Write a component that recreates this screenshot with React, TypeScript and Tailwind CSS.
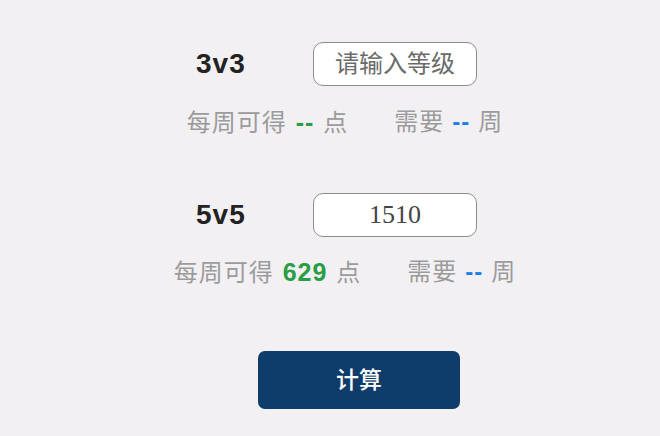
import React from "react";

const font = { fontFamily: '"Liberation Sans", "Noto Sans CJK SC", sans-serif' };

function ModeRow({ label, value }: { label: string; value?: string }) {
  return (
    <div className="flex items-center pl-[196px]">
      <span className="w-[117px] text-[28px] font-bold tracking-[1px] text-[#222]">{label}</span>
      <input
        readOnly
        value={value ?? ""}
        placeholder="请输入等级"
        className="w-[164px] h-[44px] rounded-[10px] border-[1.5px] border-[#8c8c8c] bg-white text-center text-[24px] text-[#444] placeholder:text-[#6a6a6a] outline-none"
        style={value ? { fontFamily: '"Liberation Serif", serif', fontSize: 26 } : font}
      />
    </div>
  );
}

function StatsRow({ points, weeks }: { points: string; weeks: string }) {
  return (
    <div className="flex justify-center pl-[30px] text-[24px] leading-[32px] tracking-[1px] text-[#9b9b9b]">
      <span>
        每周可得
        <span className="mx-[9px] text-[25px] font-bold tracking-[1px] text-[#2a9d45]">{points}</span>
        点
      </span>
      <span className="ml-[46px]">
        需要
        <span className="mx-[8px] font-bold tracking-[1px] text-[#1a7ee6]">{weeks}</span>
        周
      </span>
    </div>
  );
}

export default function App() {
  return (
    <div className="w-[660px] h-[436px] bg-[#f2f0f3] pt-[42px]" style={font}>
      <ModeRow label="3v3" />
      <div className="mt-[20px]">
        <StatsRow points="--" weeks="--" />
      </div>
      <div className="mt-[54px]">
        <ModeRow label="5v5" value="1510" />
      </div>
      <div className="mt-[19px]">
        <StatsRow points="629" weeks="--" />
      </div>
      <div className="mt-[62px] pl-[258px]">
        <button className="w-[202px] h-[58px] rounded-[7px] bg-[#0f3d6b] text-white text-[23px] font-medium">
          计算
        </button>
      </div>
    </div>
  );
}
